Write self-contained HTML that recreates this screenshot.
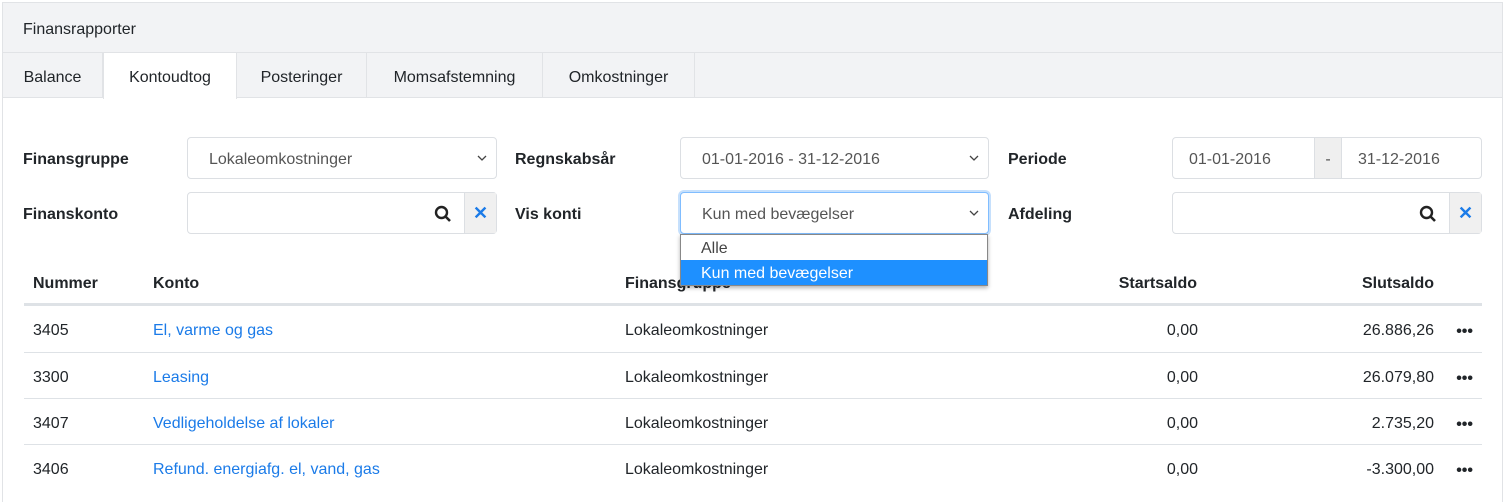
<!DOCTYPE html>
<html><head><meta charset="utf-8"><style>
*{box-sizing:border-box}
body{margin:0;width:1507px;height:495px;overflow:hidden;background:#fff;font-family:"Liberation Sans",sans-serif;font-size:16px;color:#212529;position:relative}
.card{position:absolute;left:2px;top:2px;width:1501px;height:500px;border:1px solid #e1e3e6;border-bottom:none}
.hdr{position:absolute;left:0;top:0;right:0;height:50px;background:#f2f3f5;border-bottom:1px solid #e1e3e6;padding:18px 20px 0;font-size:16px}
.tabs{position:absolute;left:0;top:50px;right:0;height:45px;background:#f2f3f5;border-bottom:1px solid #e1e3e6}
.tab{position:absolute;top:0;height:45px;line-height:49px;text-align:center;border-right:1px solid #e1e3e6}
.tab.act{background:#fff;height:46px;border-left:1px solid #e1e3e6}
.a{position:absolute}
.lbl{position:absolute;font-weight:bold}
.box{position:absolute;border:1px solid #dcdfe3;border-radius:4px;background:#fff;height:42px;line-height:43px;padding-left:21px;color:#555}
.chev{position:absolute;right:9px;top:17px}
.addon{position:absolute;top:0;width:32px;height:40px;background:#f0f0f0;border-left:1px solid #dcdfe3;text-align:center;color:#1b7be8;font-weight:bold;font-size:18px;line-height:41px}
.th{position:absolute;top:275px;font-weight:bold}
.row{position:absolute;left:24px;width:1458px;height:46px;border-top:1px solid #dee2e6}
.row span{position:absolute;top:16px}
.row span.d{top:17px;right:9px;font-weight:bold}
.lnk{color:#1b7be8}
</style></head><body>
<div class="card">
<div class="hdr">Finansrapporter</div>
<div class="tabs">
<div class="tab" style="left:0;width:100px">Balance</div>
<div class="tab act" style="left:100px;width:134px">Kontoudtog</div>
<div class="tab" style="left:234px;width:130px">Posteringer</div>
<div class="tab" style="left:364px;width:176px">Momsafstemning</div>
<div class="tab" style="left:540px;width:152px">Omkostninger</div>
</div>
</div>
<div class="lbl" style="left:23px;top:151px">Finansgruppe</div>
<div class="box" style="left:187px;top:137px;width:310px">Lokaleomkostninger<svg class="chev" width="10" height="7" viewBox="0 0 10 7"><path d="M1 1l4 4 4-4" fill="none" stroke="#444" stroke-width="1.3"/></svg></div>
<div class="lbl" style="left:515px;top:151px">Regnskabsår</div>
<div class="box" style="left:680px;top:137px;width:309px">01-01-2016 - 31-12-2016<svg class="chev" width="10" height="7" viewBox="0 0 10 7"><path d="M1 1l4 4 4-4" fill="none" stroke="#444" stroke-width="1.3"/></svg></div>
<div class="lbl" style="left:1008px;top:151px">Periode</div>
<div class="box" style="left:1172px;top:137px;width:310px;padding-left:16px">01-01-2016<span style="position:absolute;left:141px;top:0;width:28px;height:40px;background:#efefef;border-left:1px solid #dcdfe3;border-right:1px solid #dcdfe3;text-align:center">-</span><span style="position:absolute;left:185px">31-12-2016</span></div>

<div class="lbl" style="left:23px;top:206px">Finanskonto</div>
<div class="box" style="left:187px;top:192px;width:310px"><svg class="a" style="left:246px;top:12px" width="18" height="18" viewBox="0 0 18 18"><circle cx="7.5" cy="7.5" r="5.5" fill="none" stroke="#222" stroke-width="2.4"/><line x1="11.5" y1="11.5" x2="16" y2="16" stroke="#222" stroke-width="2.6"/></svg><span class="addon" style="right:0">✕</span></div>
<div class="lbl" style="left:515px;top:206px">Vis konti</div>
<div class="box" style="left:680px;top:192px;width:309px;border-color:#80bdff;box-shadow:0 0 0 2px #c6e0fc">Kun med bevægelser<svg class="chev" width="10" height="7" viewBox="0 0 10 7"><path d="M1 1l4 4 4-4" fill="none" stroke="#444" stroke-width="1.3"/></svg></div>
<div class="lbl" style="left:1008px;top:206px">Afdeling</div>
<div class="box" style="left:1172px;top:192px;width:310px"><svg class="a" style="left:246px;top:12px" width="18" height="18" viewBox="0 0 18 18"><circle cx="7.5" cy="7.5" r="5.5" fill="none" stroke="#222" stroke-width="2.4"/><line x1="11.5" y1="11.5" x2="16" y2="16" stroke="#222" stroke-width="2.6"/></svg><span class="addon" style="right:0">✕</span></div>

<div class="th" style="left:33px">Nummer</div>
<div class="th" style="left:153px">Konto</div>
<div class="th" style="left:625px">Finansgruppe</div>
<div class="th" style="left:1100px;width:97px;text-align:right">Startsaldo</div>
<div class="th" style="left:1330px;width:104px;text-align:right">Slutsaldo</div>
<div class="a" style="left:24px;top:303px;width:1458px;height:3px;background:#dee2e6"></div>

<div class="row" style="top:306px;border-top:none"><span style="left:9px">3405</span><span class="lnk" style="left:129px">El, varme og gas</span><span style="left:601px">Lokaleomkostninger</span><span style="right:284px">0,00</span><span style="right:48px">26.886,26</span><span class="d">•••</span></div>
<div class="row" style="top:352px"><span style="left:9px">3300</span><span class="lnk" style="left:129px">Leasing</span><span style="left:601px">Lokaleomkostninger</span><span style="right:284px">0,00</span><span style="right:48px">26.079,80</span><span class="d">•••</span></div>
<div class="row" style="top:398px"><span style="left:9px">3407</span><span class="lnk" style="left:129px">Vedligeholdelse af lokaler</span><span style="left:601px">Lokaleomkostninger</span><span style="right:284px">0,00</span><span style="right:48px">2.735,20</span><span class="d">•••</span></div>
<div class="row" style="top:444px"><span style="left:9px">3406</span><span class="lnk" style="left:129px">Refund. energiafg. el, vand, gas</span><span style="left:601px">Lokaleomkostninger</span><span style="right:284px">0,00</span><span style="right:48px">-3.300,00</span><span class="d">•••</span></div>

<div class="a" style="left:680px;top:234px;width:308px;height:52px;background:#fff;border:1px solid #888;box-shadow:0 2px 4px rgba(0,0,0,.3)">
<div style="height:25px;line-height:27px;padding-left:20px;color:#444">Alle</div>
<div style="height:25px;line-height:27px;padding-left:20px;background:#1e90ff;color:#fff">Kun med bevægelser</div>
</div>
</body></html>
